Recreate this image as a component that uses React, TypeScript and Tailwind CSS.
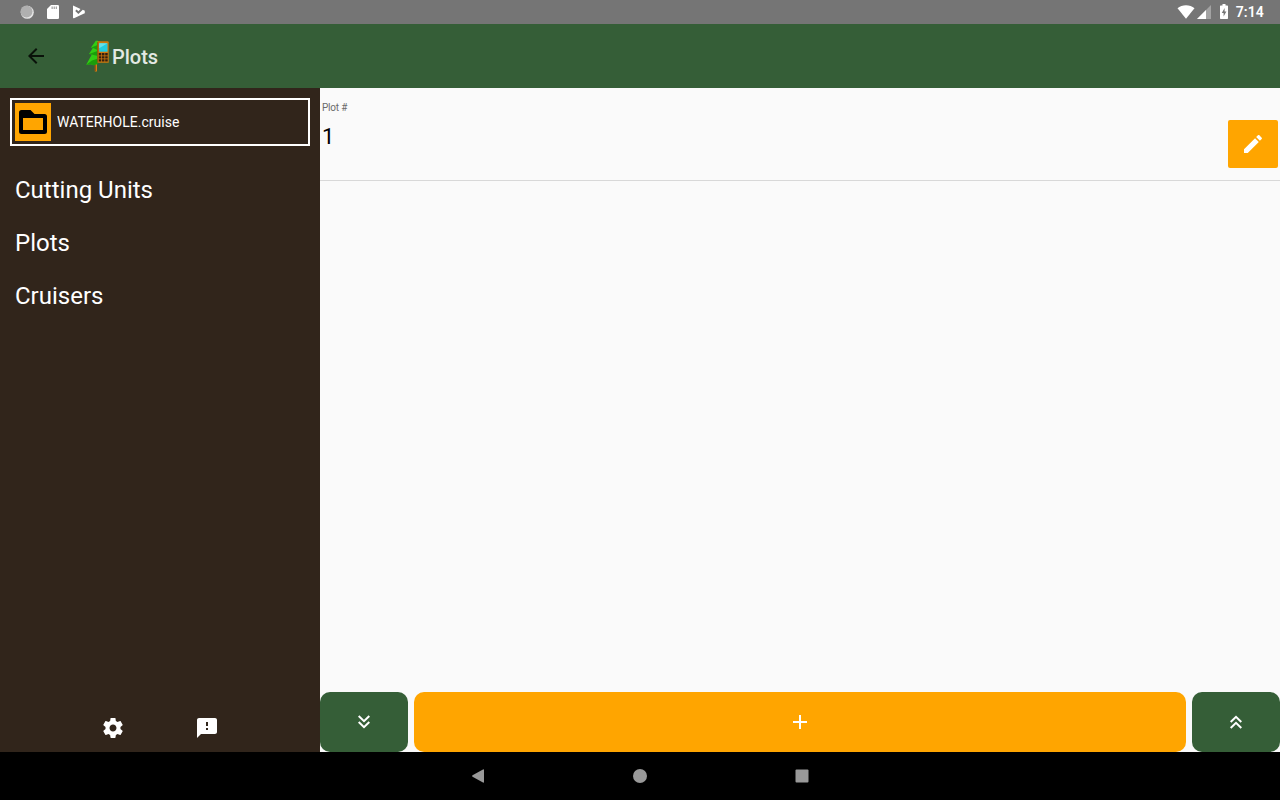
import type { ReactNode } from "react";

function Icon({ d, className, box = "0 0 24 24" }: { d: string; className: string; box?: string }) {
  return (
    <svg viewBox={box} className={`shrink-0 ${className}`} fill="currentColor" fillRule="evenodd" aria-hidden="true">
      <path d={d} />
    </svg>
  );
}

const BACK = "M20 11H7.83l5.59-5.59L12 4l-8 8 8 8 1.41-1.41L7.83 13H20v-2z";
const EDIT =
  "M3 17.25V21h3.75L17.81 9.94l-3.75-3.75L3 17.25zM20.71 7.04c.39-.39.39-1.02 0-1.41l-2.34-2.34c-.39-.39-1.02-.39-1.41 0l-1.83 1.83 3.75 3.75 1.83-1.83z";
const SETTINGS =
  "M19.43 12.98c.04-.32.07-.64.07-.98s-.03-.66-.07-.98l2.11-1.65c.19-.15.24-.42.12-.64l-2-3.46c-.12-.22-.39-.3-.61-.22l-2.49 1c-.52-.4-1.08-.73-1.69-.98l-.38-2.65C14.46 2.18 14.25 2 14 2h-4c-.25 0-.46.18-.49.42l-.38 2.65c-.61.25-1.17.59-1.69.98l-2.49-1c-.23-.09-.49 0-.61.22l-2 3.46c-.13.22-.07.49.12.64l2.11 1.65c-.04.32-.07.65-.07.98s.03.66.07.98l-2.11 1.65c-.19.15-.24.42-.12.64l2 3.46c.12.22.39.3.61.22l2.49-1c.52.4 1.08.73 1.69.98l.38 2.65c.03.24.24.42.49.42h4c.25 0 .46-.18.49-.42l.38-2.65c.61-.25 1.17-.59 1.69-.98l2.49 1c.23.09.49 0 .61-.22l2-3.46c.12-.22.07-.49-.12-.64l-2.11-1.65zM12 15.5c-1.93 0-3.5-1.57-3.5-3.5s1.57-3.5 3.5-3.5 3.5 1.57 3.5 3.5-1.57 3.5-3.5 3.5z";
const FEEDBACK =
  "M20 2H4c-1.1 0-1.99.9-1.99 2L2 22l4-4h14c1.1 0 2-.9 2-2V4c0-1.1-.9-2-2-2zm-7 12h-2v-2h2v2zm0-4h-2V6h2v4z";
const FOLDER =
  "M2.5 0H11.500l4 4H25.500a2.500 2.500 0 0 1 2.500 2.500V21.500a2.500 2.500 0 0 1-2.500 2.500H2.500a2.500 2.500 0 0 1-2.500-2.500V2.500a2.500 2.500 0 0 1 2.500-2.500zM4 8V20H24V8z";

function StatusBar() {
  return (
    <div className="flex h-6 shrink-0 items-center justify-between bg-[#757575] text-white">
      <div className="flex items-center pl-5">
        <svg viewBox="0 0 14 14" className="size-3.5" aria-hidden="true">
          <circle cx="7.300" cy="7.300" r="6.500" fill="#e6e6e6" />
          <circle cx="6.500" cy="6.500" r="6" fill="#b0b0b0" />
        </svg>
        <svg viewBox="0 0 12 14" className="ml-[13px] h-3.5 w-3" aria-hidden="true">
          <path d="M4 0h6.700Q12 0 12 1.300V12.700Q12 14 10.700 14H1.300Q0 14 0 12.700V4z" fill="#fff" />
          <path d="M4.500 1.500h1.300v2.500H4.500zm2.100 0h1.300v2.500H6.600zm2.100 0H10v2.500H8.700z" fill="#a8a8a8" />
        </svg>
        <svg viewBox="0 0 14 14" className="ml-[13px] size-3.5" aria-hidden="true">
          <path d="M1 .6 8.500 4 6.400 6.300 4.600 4.500 3.200 5.900l3.200 3.200 4.400-4.400 2.400 1.200-.8 1.200.8 1-11.200 5.100A.7.700 0 0 1 1 12.600z" fill="#fff" />
        </svg>
      </div>
      <div className="flex items-center pr-4">
        <svg viewBox="0 0 18 14" className="h-3.5 w-[18px]" aria-hidden="true">
          <path d="M9 13.800.5 3.200C2.800 1.300 5.700.2 9 .2s6.200 1.100 8.500 3z" fill="#fff" />
        </svg>
        <svg viewBox="0 0 14 14" className="ml-0.5 size-3.5" aria-hidden="true">
          <path d="M14 0v14H0z" fill="#a3a3a3" />
          <path d="M9 5v9H0z" fill="#fff" />
        </svg>
        <svg viewBox="0 0 8 15" className="mb-0.5 ml-[9px] h-[15px] w-2" aria-hidden="true">
          <path d="M2.500 0h3v1.500H7.300q.7 0 .7.700V14.300q0 .7-.7.700H.7Q0 15 0 14.300V2.200q0-.7.700-.7H2.500z" fill="#fff" />
          <path d="M4.600 4 1.800 9h1.800v3.500L6.400 7.500H4.600z" fill="#757575" />
        </svg>
        <span className="ml-2 text-sm leading-6 font-semibold tracking-[0.01em]">7:14</span>
      </div>
    </div>
  );
}

function AppLogo() {
  return (
    <svg viewBox="0 0 24 32" className="h-8 w-6" aria-hidden="true">
      <path d="M8.800 23h2.200v8.500H8.800z" fill="#d97b12" />
      <path d="M8.800 23h.8v8h-.8z" fill="#70410d" />
      <path d="M9.800.8 4.800 7.800l2 .3-3.800 6 2.800.3L.2 24.800l4.600-.6 3 1 4.200-1.500V.8z" fill="#30cc14" />
      <path d="M4.800 7.800 11.500 5v5L7 8.100zM3 14.100 11.500 11v5l-5.700-1.600zM.2 24.800 6 20.500l6-2v5.200l-4.200 1.500-3-1z" fill="#1b9c0b" />
      <path d="M11.500 1.300h10.200q1 0 1 1V22.800H11.500z" fill="#cf780e" />
      <path d="M11.300 2v20.500h1V2z" fill="#81500f" />
      <path d="M13.200 3.300h8.300v8.400h-8.300z" fill="#22cce0" />
      <path d="M13.200 3.300h8.300l-8.300 5z" fill="#68dfe7" />
      <path d="M12.800 13.100h2.500v2.300h-2.500zm3.200 0h2.500v2.300H16zm3.200 0h2.500v2.300h-2.500zm-6.400 3.100h2.500v2.300h-2.500zm3.200 0h2.500v2.300H16zm3.200 0h2.500v2.300h-2.500zm-6.400 3.100h2.500v2.300h-2.500zm3.200 0h2.500v2.300H16zm3.200 0h2.500v2.300h-2.500z" fill="#33200e" />
    </svg>
  );
}

function NavItem({ children }: { children: ReactNode }) {
  return <a className="block h-[53px] pl-[15px] text-2xl leading-[53px]">{children}</a>;
}

function Sidebar() {
  return (
    <aside className="flex w-80 shrink-0 flex-col bg-[#31251b] text-white">
      <div className="mx-2.5 mt-2.5 flex h-12 shrink-0 items-center border-2 border-white px-[3px]">
        <div className="flex h-[38px] w-9 items-center justify-center bg-[#ffa500] text-black">
          <Icon d={FOLDER} box="0 0 28 24" className="h-6 w-7" />
        </div>
        <span className="ml-1.5 text-sm tracking-[0.002em]">WATERHOLE.cruise</span>
      </div>
      <nav className="mt-[18px] grow">
        <NavItem>Cutting Units</NavItem>
        <NavItem>Plots</NavItem>
        <NavItem>Cruisers</NavItem>
      </nav>
      <div className="mb-3 flex gap-[70px] pl-[101px]">
        <Icon d={SETTINGS} className="size-6" />
        <Icon d={FEEDBACK} className="size-6" />
      </div>
    </aside>
  );
}

function Chevrons({ up = false }: { up?: boolean }) {
  return (
    <svg viewBox="0 0 14 14" className={up ? "size-3.5 rotate-180" : "size-3.5"} fill="none" stroke="#fff" strokeWidth="2" aria-hidden="true">
      <path d="M1.700 1 7 6.200 12.300 1M1.700 7 7 12.200 12.300 7" />
    </svg>
  );
}

function PlotList() {
  return (
    <main className="flex grow flex-col bg-[#fafafa]">
      <div className="flex h-[93px] justify-between border-b border-[#d8d8d8] px-0.5">
        <div>
          <div className="mt-3 text-[10px] leading-4 tracking-[-0.02em] text-[#6b6b6b]">Plot #</div>
          <div className="mt-[7px] text-[22px] leading-7 text-black">1</div>
        </div>
        <button className="mt-8 flex h-12 w-[50px] items-center justify-center rounded-[2px] bg-[#ffa500] text-white">
          <Icon d={EDIT} className="size-6" />
        </button>
      </div>
      <div className="grow" />
      <div className="flex h-[60px] gap-1.5">
        <button className="flex w-[88px] items-center justify-center rounded-[10px] bg-[#355e37]">
          <Chevrons />
        </button>
        <button className="flex grow items-center justify-center rounded-[10px] bg-[#ffa500] text-white">
          <Icon d="M6 0h2v6h6v2H8v6H6V8H0V6h6z" box="0 0 14 14" className="size-3.5" />
        </button>
        <button className="flex w-[88px] items-center justify-center rounded-[10px] bg-[#355e37]">
          <Chevrons up />
        </button>
      </div>
    </main>
  );
}

export default function App() {
  return (
    <div className="flex h-[800px] w-[1280px] flex-col overflow-hidden bg-black font-['Roboto',sans-serif]">
      <StatusBar />
      <header className="flex h-16 shrink-0 items-center bg-[#355e37]">
        <Icon d={BACK} className="ml-6 size-6 text-[#0a120a]" />
        <div className="ml-[38px]">
          <AppLogo />
        </div>
        <h1 className="mt-0.5 ml-0.5 text-xl font-medium text-[#e3e9e3]">Plots</h1>
      </header>
      <div className="flex min-h-0 grow">
        <Sidebar />
        <PlotList />
      </div>
      <footer className="flex h-12 shrink-0 items-center justify-center gap-[148px] text-[#999]">
        <Icon d="M13 1v12q0 1-1 .5L1.500 7.700q-.9-.7 0-1.400L12 .5q1-.5 1 .5z" box="0 0 14 14" className="size-3.5" />
        <Icon d="M7 0a7 7 0 1 0 0 14A7 7 0 0 0 7 0z" box="0 0 14 14" className="size-3.5" />
        <Icon d="M1.500.5h11q1 0 1 1v11q0 1-1 1h-11q-1 0-1-1v-11q0-1 1-1z" box="0 0 14 14" className="size-3.5" />
      </footer>
    </div>
  );
}
